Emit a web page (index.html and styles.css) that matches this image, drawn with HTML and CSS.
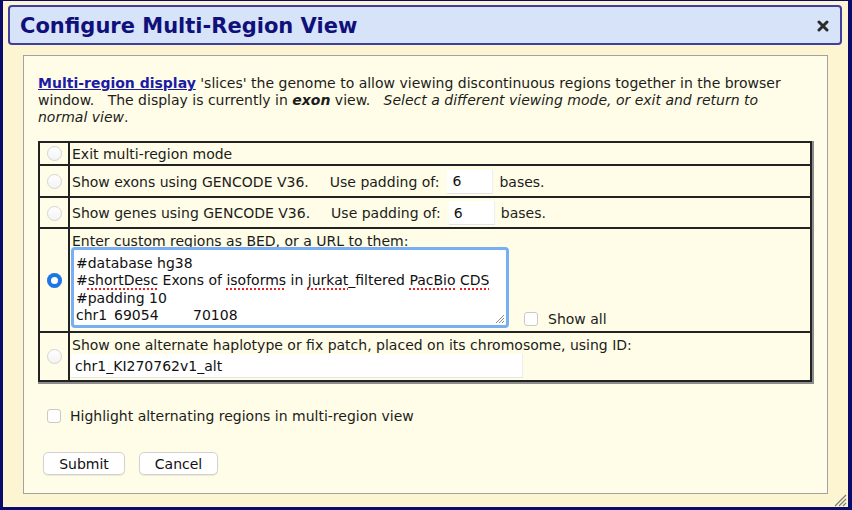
FILE: index.html
```html
<!DOCTYPE html>
<html>
<head>
<meta charset="utf-8">
<link rel="stylesheet" href="styles.css">
</head>
<body>
<div class="window">
  <div class="titlebar">
    <h1 class="title">Configure Multi-Region View</h1>
    <span class="close"><svg width="12" height="12" viewBox="0 0 12 12"><path d="M2 2L10 10M10 2L2 10" stroke="#2b2b2b" stroke-width="3" stroke-linecap="round"/></svg></span>
  </div>
  <div class="panel">
    <p class="intro"><a href="#" class="link">Multi-region display</a> 'slices' the genome to allow viewing discontinuous regions together in the browser<br>window.&nbsp;&nbsp; The display is currently in <b><i>exon</i></b> view.&nbsp;&nbsp;&nbsp;<i>Select a different viewing mode, or exit and return to<br>normal view</i>.</p>
    <table class="modes">
      <tr>
        <td class="rc"><div class="cell h1"><input type="radio" name="mode" class="radio"></div></td>
        <td><div class="cell h1 tx">Exit multi-region mode</div></td>
      </tr>
      <tr>
        <td class="rc"><div class="cell h2"><input type="radio" name="mode" class="radio"></div></td>
        <td><div class="cell h2 tx">Show exons using GENCODE V36.<span class="pad">Use padding of:</span><input class="num" type="text" value="6"><span class="bases">bases.</span></div></td>
      </tr>
      <tr>
        <td class="rc"><div class="cell h3"><input type="radio" name="mode" class="radio"></div></td>
        <td><div class="cell h3 tx">Show genes using GENCODE V36.<span class="pad">Use padding of:</span><input class="num" type="text" value="6"><span class="bases">bases.</span></div></td>
      </tr>
      <tr>
        <td class="rc"><div class="cell h4"><input type="radio" name="mode" class="radio" checked></div></td>
        <td><div class="stack h4">
          <div class="lbl">Enter custom regions as BED, or a URL to them:</div>
          <div class="bedrow">
            <div class="bed" role="textbox">
              <div>#database hg38</div>
              <div>#<span class="sp">shortDesc</span> Exons of <span class="sp">isoforms</span> in <span class="sp">jurkat</span>_filtered <span class="sp">PacBio</span> <span class="sp">CDS</span></div>
              <div>#padding 10</div>
              <div><span class="c1">chr1</span><span class="c2">69054</span>70108</div>
              <svg class="tgrip" width="11" height="11" viewBox="0 0 11 11"><path d="M10 2L2 10M10 5L5 10M10 8L8 10" stroke="#8a8a8a" stroke-width="1"/></svg>
            </div>
            <label class="showall"><input type="checkbox" class="check">Show all</label>
          </div>
        </div></td>
      </tr>
      <tr>
        <td class="rc"><div class="cell h5"><input type="radio" name="mode" class="radio"></div></td>
        <td><div class="stack h5">
          <div class="lbl">Show one alternate haplotype or fix patch, placed on its chromosome, using ID:</div>
          <input class="alt" type="text" value="chr1_KI270762v1_alt">
        </div></td>
      </tr>
    </table>
    <label class="highlight"><input type="checkbox" class="check">Highlight alternating regions in multi-region view</label>
    <div class="buttons">
      <button class="btn btn-submit">Submit</button>
      <button class="btn btn-cancel">Cancel</button>
    </div>
  </div>
  <svg class="wgrip" width="13" height="13" viewBox="0 0 13 13"><path d="M12 1L1 12M12 5L5 12M12 9L9 12" stroke="#7c7c7c" stroke-width="1.2"/></svg>
</div>
</body>
</html>
```
FILE: styles.css
```css
html, body {
  margin: 0;
  padding: 0;
}
body {
  font-family: "DejaVu Sans", Verdana, sans-serif;
  font-size: 14px;
  color: #1c1c1c;
}
.window {
  position: relative;
  width: 852px;
  height: 510px;
  box-sizing: border-box;
  border-style: solid;
  border-color: #0b0b6c;
  border-width: 1px 4px 3px 3px;
  background: #fdf5d2;
  padding: 4px 6px 0 5px;
}
.titlebar {
  height: 40px;
  box-sizing: border-box;
  border: 2px solid #40409c;
  border-radius: 4px;
  background: #d7e3f8;
  display: flex;
  align-items: center;
  justify-content: space-between;
  padding: 2px 11px 0 10px;
}
.title {
  margin: 0;
  font-size: 21px;
  font-weight: bold;
  color: #10107a;
}
.close {
  display: flex;
  width: 12px;
  height: 12px;
}
.panel {
  margin: 10px 14px 0 15px;
  height: 439px;
  box-sizing: border-box;
  border: 1px solid #a2a2a2;
  background: #fffde7;
  padding: 19px 14px 0 14px;
}
.intro {
  margin: 0 0 15px 0;
  line-height: 17px;
  white-space: nowrap;
}
.link {
  color: #1b1ba6;
  font-weight: bold;
  text-decoration: underline;
}
.modes {
  width: 774px;
  border-collapse: separate;
  border-spacing: 0;
  border: 1px solid #222;
  box-shadow: 1px 1px 0 1px #8c8c8c;
}
.modes td {
  border: 1px solid #222;
  padding: 0;
  vertical-align: top;
}
.modes td.rc {
  width: 28px;
}
.cell {
  display: flex;
  align-items: center;
}
.rc .cell {
  justify-content: center;
  padding-left: 1px;
}
.tx {
  padding-left: 2px;
}
.h1 { height: 21px; }
.h2 { height: 30px; padding-top: 1px; box-sizing: border-box; }
.h3 { height: 29px; padding-top: 1px; box-sizing: border-box; }
.h4 { height: 102px; }
.h5 { height: 47px; }
.pad {
  margin-left: 21px;
}
.num {
  width: 46px;
  height: 24px;
  box-sizing: border-box;
  margin: 0 6px 0 8px;
  border: none;
  border-bottom: 1px solid #e4e4e4;
  border-right: 1px solid #eeeeee;
  background: #ffffff;
  font-family: inherit;
  font-size: 14px;
  padding: 0 5px;
  color: #111;
}
.radio {
  appearance: none;
  -webkit-appearance: none;
  margin: 0;
  width: 15px;
  height: 15px;
  border-radius: 50%;
  border: 1px solid #d4d4d4;
  background: linear-gradient(#ffffff, #f3f3f3);
  box-sizing: border-box;
}
.radio:checked {
  border: none;
  background: #1c76e6;
  box-shadow: inset 0 0 0 4px #1c76e6, inset 0 0 0 8px #ffffff;
}
.stack {
  display: flex;
  flex-direction: column;
  padding-left: 2px;
  box-sizing: border-box;
}
.lbl {
  line-height: 16px;
  margin-top: 4px;
}
.bedrow {
  display: flex;
  align-items: flex-end;
  margin-top: -2px;
}
.bed {
  position: relative;
  width: 438px;
  height: 81px;
  box-sizing: border-box;
  margin-left: -1px;
  border: 3px solid #78aef2;
  border-radius: 4px;
  background: #ffffff;
  padding: 5px 0 0 2px;
  line-height: 17.4px;
  white-space: nowrap;
  color: #111;
  overflow: hidden;
}
.sp {
  text-decoration: underline dotted #e3262a;
  text-decoration-thickness: 2px;
  text-underline-offset: 3px;
}
.c1 {
  display: inline-block;
  width: 38px;
}
.c2 {
  display: inline-block;
  width: 79px;
}
.tgrip {
  position: absolute;
  right: 1px;
  bottom: 1px;
}
.showall {
  display: flex;
  align-items: center;
  margin: 0 0 1px 15px;
}
.check {
  appearance: none;
  -webkit-appearance: none;
  width: 14px;
  height: 14px;
  margin: 0 10px 0 0;
  border: 1px solid #c9c9c9;
  border-radius: 3px;
  background: #ffffff;
  box-sizing: border-box;
}
.alt {
  width: 452px;
  height: 24px;
  box-sizing: border-box;
  margin: 1px 0 0 -1px;
  border: none;
  border-bottom: 1px solid #e4e4e4;
  border-right: 1px solid #eeeeee;
  background: #ffffff;
  font-family: inherit;
  font-size: 14px;
  padding: 0 4px;
  color: #111;
}
.highlight {
  display: flex;
  align-items: center;
  margin: 26px 0 0 9px;
  line-height: 16px;
}
.highlight .check {
  margin-right: 9px;
}
.buttons {
  display: flex;
  gap: 14px;
  margin: 28px 0 0 5px;
}
.btn {
  height: 23px;
  box-sizing: border-box;
  border: 1px solid #d2d2d2;
  border-radius: 5px;
  background: #ffffff;
  font-family: inherit;
  font-size: 14px;
  color: #111;
  padding: 0;
  box-shadow: 0 1px 1px rgba(0, 0, 0, 0.08);
}
.btn-submit { width: 82px; }
.btn-cancel { width: 79px; }
.wgrip {
  position: absolute;
  right: 1px;
  bottom: 0;
}
```
